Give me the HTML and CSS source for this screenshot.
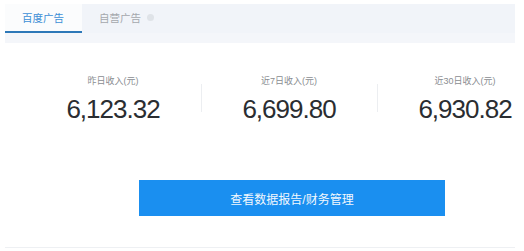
FILE: index.html
```html
<!DOCTYPE html>
<html lang="zh-CN">
<head>
    <meta charset="UTF-8">
    <meta name="viewport" content="width=device-width, initial-scale=1.0">
    <title>广告收入</title>
    <link rel="stylesheet" href="styles.css">
</head>
<body>
    <div class="panel">
        <div class="tabs">
            <a class="tab active">百度广告</a>
            <a class="tab">自营广告<span class="help"></span></a>
        </div>
        <div class="tab-strip"></div>
        <div class="stats">
            <div class="stat">
                <div class="label">昨日收入(元)</div>
                <div class="num">6,123.32</div>
            </div>
            <div class="stat line">
                <div class="label">近7日收入(元)</div>
                <div class="num">6,699.80</div>
            </div>
            <div class="stat line last">
                <div class="label">近30日收入(元)</div>
                <div class="num">6,930.82</div>
            </div>
        </div>
        <div class="btn-row">
            <button class="report">查看数据报告/财务管理</button>
        </div>
    </div>
</body>
</html>
```

FILE: styles.css
```css
body{
    margin: 0;
    background-color: #fff;
    font-family: "Liberation Sans", "Noto Sans CJK SC", sans-serif;
}
.panel{
    width: 510px;
    height: 243px;
    margin: 4px 0 0 5px;
    border-bottom: 1px solid #eef0f3;
}
.tabs{
    display: flex;
    height: 29px;
    background-color: #f1f4f9;
}
.tab{
    display: flex;
    align-items: center;
    height: 27px;
    padding: 0 18px 0 17px;
    font-size: 10.5px;
    color: #a4a8ad;
    border-bottom: 2px solid transparent;
}
.tab.active{
    color: #3d8fd6;
    background-color: #fbfcfd;
    border-bottom-color: #2d78b8;
}
.help{
    display: inline-block;
    width: 7px;
    height: 7px;
    margin-left: 6px;
    border-radius: 50%;
    background-color: #dfe3e8;
}
.tab-strip{
    height: 10px;
    background-color: #f4f6fa;
    border-bottom: 1px solid #fff;
}
.stats{
    display: flex;
    margin: 31px 0 0 20px;
}
.stat{
    flex: none;
    width: 176px;
    text-align: center;
    position: relative;
    box-sizing: border-box;
}
/* 最后一列贴着右边，用左内边距把内容挪回列中心 */
.stat.last{
    width: 138px;
    padding-left: 38px;
}
.stat.line::before{
    content: "";
    position: absolute;
    left: 0;
    top: 9px;
    height: 28px;
    border-left: 1px solid #eceef1;
}
.label{
    font-size: 9px;
    color: #8a8d91;
    line-height: 12px;
}
.num{
    margin-top: 7px;
    font-size: 26px;
    letter-spacing: -1px;
    line-height: 30px;
    color: #2a2d31;
}
.btn-row{
    margin: 56px 0 0 134px;
}
.report{
    display: block;
    width: 306px;
    height: 36px;
    border: 0;
    background-color: #1a8ff0;
    color: #f2f8fe;
    font-size: 12px;
    font-family: "Liberation Sans", "Noto Sans CJK SC", sans-serif;
    cursor: pointer;
}
```
